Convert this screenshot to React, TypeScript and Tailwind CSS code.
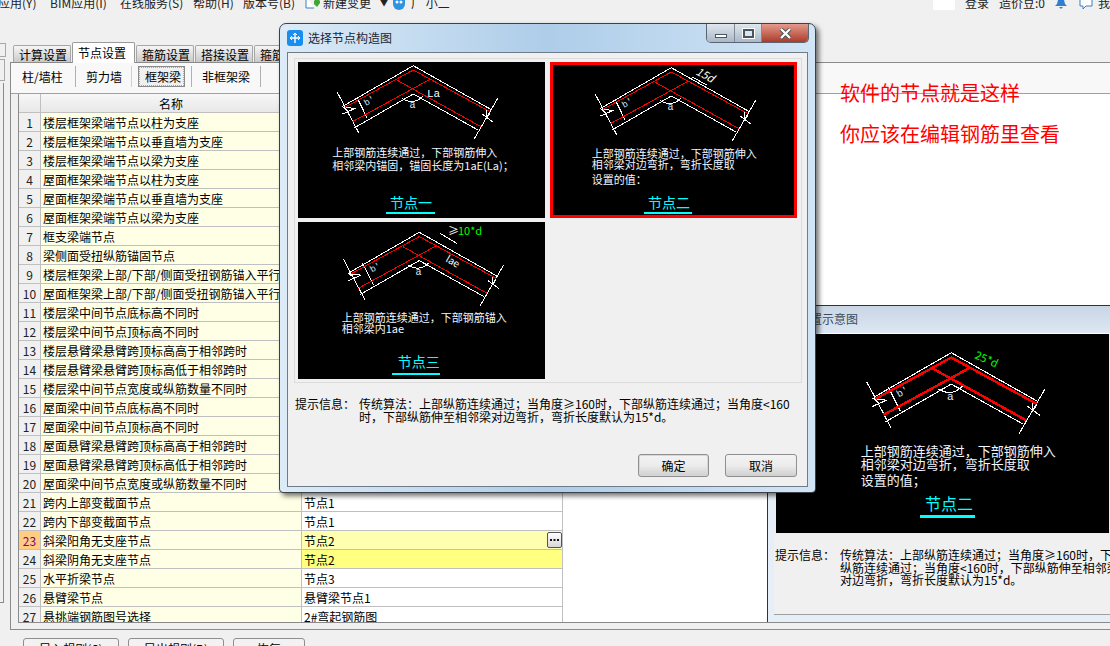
import type { ReactNode } from "react";

const COMMA = "\uFF0C";
const SEMI = "\uFF1B";
const COLON = "\uFF1A";

const names = [
  "楼层框架梁端节点以柱为支座",
  "楼层框架梁端节点以垂直墙为支座",
  "楼层框架梁端节点以梁为支座",
  "屋面框架梁端节点以柱为支座",
  "屋面框架梁端节点以垂直墙为支座",
  "屋面框架梁端节点以梁为支座",
  "框支梁端节点",
  "梁侧面受扭纵筋锚固节点",
  "楼层框架梁上部/下部/侧面受扭钢筋锚入平行墙节点",
  "屋面框架梁上部/下部/侧面受扭钢筋锚入平行墙节点",
  "楼层梁中间节点底标高不同时",
  "楼层梁中间节点顶标高不同时",
  "楼层悬臂梁悬臂跨顶标高高于相邻跨时",
  "楼层悬臂梁悬臂跨顶标高低于相邻跨时",
  "楼层梁中间节点宽度或纵筋数量不同时",
  "屋面梁中间节点底标高不同时",
  "屋面梁中间节点顶标高不同时",
  "屋面悬臂梁悬臂跨顶标高高于相邻跨时",
  "屋面悬臂梁悬臂跨顶标高低于相邻跨时",
  "屋面梁中间节点宽度或纵筋数量不同时",
  "跨内上部变截面节点",
  "跨内下部变截面节点",
  "斜梁阳角无支座节点",
  "斜梁阴角无支座节点",
  "水平折梁节点",
  "悬臂梁节点",
  "悬挑端钢筋图号选择",
];

const values: Record<number, string> = {
  21: "节点1",
  22: "节点1",
  23: "节点2",
  24: "节点2",
  25: "节点3",
  26: "悬臂梁节点1",
  27: "2#弯起钢筋图",
};

function Beam({ thick = false }: { thick?: boolean }) {
  const red = thick ? 2.2 : 1;
  return (
    <g fill="none" strokeWidth={1}>
      <polyline points="45.3,44 115.3,3.7 192.7,47.3" stroke="#fff" />
      <polyline points="56,66 115.3,32 180,68" stroke="#fff" />
      <polyline points="39.3,30.3 61,71.3" stroke="#fff" />
      <polyline points="199.7,36.3 176,77.3" stroke="#fff" />
      <polyline points="58.7,34.7 69.3,56.3" stroke="#fff" />
      <polyline points="43.7,52.3 57,46.5 45,45 51,50" stroke="#fff" />
      <polyline points="184,52 195,60" stroke="#fff" />
      <polyline points="188,47 189,56 192,51" stroke="#fff" />
      <path d="M103.7 36.3 Q115 44 125.3 34" stroke="#fff" />
      <polyline points="47,45.3 115.3,8 192,49.7" stroke="#f00" strokeWidth={red} />
      <polyline points="54.3,59.7 132,17.3" stroke="#f00" strokeWidth={red} />
      <polyline points="183,64.7 98.7,18" stroke="#f00" strokeWidth={red} />
      <text x="68" y="44" fontSize="9" fill="#cfe4ff" transform="rotate(-30 68 44)" className="font-['Liberation_Mono',monospace]">b'</text>
      <text x="111.5" y="46" fontSize="10" fill="#dfefff" className="font-['Liberation_Mono',monospace]">a</text>
    </g>
  );
}

function CadText({ x, y, size = 11, children }: { x: number; y: number; size?: number; children: ReactNode }) {
  return (
    <text x={x} y={y} fontSize={size} fill="#f2f6ff">
      {children}
    </text>
  );
}

function NodeCard({ selected = false, children }: { selected?: boolean; children: ReactNode }) {
  return (
    <div className={selected ? "relative h-full bg-black outline-[3px] -outline-offset-[3px] outline-[#ff0000]" : "h-full bg-black"}>
      <svg width="247" height="157" viewBox="0 0 247 157" className="block" shapeRendering="crispEdges">
        {children}
      </svg>
    </div>
  );
}

function NodeTitle({ x, y, w, lineX, lineY, label }: { x: number; y: number; w: number; lineX: number; lineY: number; label: string }) {
  return (
    <g>
      <text x={x} y={y} fontSize="14" fill="#00ffff">
        {label}
      </text>
      <rect x={lineX} y={lineY} width={w} height="2" fill="#00ffff" />
    </g>
  );
}

function TabItem({ label, active = false }: { label: string; active?: boolean }) {
  if (active) {
    return (
      <div className="relative z-10 -mb-px h-[21px] w-[63px] self-end rounded-t-[2px] border border-b-0 border-[#9a9a9a] bg-white pl-[5px] text-[12px] leading-[20px] text-black">
        {label}
      </div>
    );
  }
  return (
    <div className="h-[17px] w-[58px] self-end rounded-t-[2px] border border-b-0 border-[#a6a6a6] bg-gradient-to-b from-[#f6f6f6] to-[#c9c9c9] pl-[5px] text-[12px] leading-[17px] text-black">
      {label}
    </div>
  );
}

function WinButton({ label, wide }: { label: string; wide: string }) {
  return (
    <button className={`h-[23px] rounded-[3px] border border-[#8f8f8f] bg-gradient-to-b from-[#f3f3f3] via-[#ececec] to-[#cfcfcf] text-[12px] leading-[21px] text-black ${wide}`}>
      {label}
    </button>
  );
}

export default function App() {
  return (
    <div className="relative flex h-[646px] w-[1110px] flex-col overflow-hidden bg-[#f0f0f0] font-['Noto_Sans_CJK_SC',sans-serif] text-black">
      {/* top menu, cut off by the screenshot */}
      <div className="flex h-[10px] items-end overflow-hidden whitespace-nowrap text-[12px] leading-[14px] text-[#222]">
        <span className="-ml-[2px] w-[52px]">应用(Y)</span>
        <span className="w-[70px]">BIM应用(I)</span>
        <span className="w-[73px]">在线服务(S)</span>
        <span className="w-[50px]">帮助(H)</span>
        <span className="w-[62px]">版本号(B)</span>
        <svg width="16" height="14" viewBox="0 0 16 14" className="mr-[2px]">
          <path d="M1 0v12h8" fill="#fff" stroke="#3a7fc4" />
          <path d="M9 5l3-3 3 3v2l-3 4-3-3z" fill="#3fa535" />
        </svg>
        <span className="w-[57px]">新建变更</span>
        <span className="w-[12px] text-[8px] leading-[14px]">▼</span>
        <svg width="14" height="12" viewBox="0 0 14 12" className="mr-[5px]">
          <path d="M1 0h12v6a6 6 0 0 1-12 0z" fill="#2f93e0" />
          <circle cx="5" cy="4" r="1.5" fill="#fff" />
          <circle cx="9" cy="4" r="1.5" fill="#fff" />
        </svg>
        <span>广 小二</span>
        <div className="ml-auto flex items-end">
          <div className="mr-[10px] h-[10px] w-[22px] bg-white" />
          <span className="mr-[10px]">登录</span>
          <span className="mr-[10px]">造价豆:0</span>
          <svg width="12" height="10" viewBox="0 0 12 10" className="mr-[12px]">
            <path d="M3 0h6l1 4 2 2H0l2-2z" fill="#2f7fd0" />
            <path d="M4 7h4l-2 2z" fill="#2f7fd0" />
          </svg>
          <svg width="14" height="10" viewBox="0 0 14 10" className="mr-[5px]">
            <path d="M1 0v6h3v3l3-3h6V0" fill="#fff" stroke="#3a7fc4" />
          </svg>
          <span className="w-[12px]">我</span>
        </div>
      </div>
      <div className="h-[32px]" />

      <div className="flex h-[588px]">
        {/* left rail, mostly hidden behind the panel */}
        <div className="flex w-[10px] flex-col pt-px">
          <div className="h-[14px] w-[6px] border border-l-0 border-[#a8a8a8]" />
          <div className="mt-[2px] h-[22px] w-[5px] border border-l-0 border-[#a8a8a8]" />
          <div className="mt-[2px] h-[520px] w-[4px] border-r border-b border-[#8a8a8a]" />
        </div>

        <div className="flex min-w-0 flex-1 flex-col">
          <div className="flex h-[20px] gap-px pl-[3px]">
            <TabItem label="计算设置" />
            <TabItem label="节点设置" active />
            <TabItem label="箍筋设置" />
            <TabItem label="搭接设置" />
            <TabItem label="箍筋肢数" />
          </div>

          <div className="flex h-[568px] flex-col border-y border-l border-[#8a8a8a]">
            <div className="flex h-[31px] shrink-0 items-start border-b border-[#a0a0a0] bg-[#f8f8f8] pt-[3px] text-[12px] leading-[21px]">
              <div className="h-[21px] w-[65px] border-r border-[#b0b0b0] pl-[11px]">柱/墙柱</div>
              <div className="h-[21px] w-[56px] border-r border-[#d0d0d0] pl-[10px]">剪力墙</div>
              <div className="ml-[6px] h-[21px] w-[47px] border border-[#8a8a8a] bg-[#f0f0f0] pl-[6px] leading-[20px] outline-1 -outline-offset-2 outline-dotted outline-[#aaa]">框架梁</div>
              <div className="ml-[6px] h-[21px] w-[70px] border-x border-[#b0b0b0] pl-[10px]">非框架梁</div>
            </div>

            <div className="flex h-[529px] shrink-0 pl-[7px]">
              <div className="flex h-[529px] w-full overflow-hidden border-b border-l border-[#8a8a8a] bg-white">
                {/* parameter grid */}
                <div className="w-[748px] shrink-0 text-[12px] leading-[19px]">
                  <div className="flex h-[19px] w-[544px] border-b border-[#c0c0c0]">
                    <div className="w-[22px] border-r border-[#c0c0c0] bg-gradient-to-b from-[#f7f7f7] to-[#e8e8e8]" />
                    <div className="w-[522px] border-r border-[#c0c0c0] bg-gradient-to-b from-[#f7f7f7] to-[#e8e8e8]">
                      <div className="w-[260px] text-center">名称</div>
                    </div>
                  </div>
                  {names.map((name, i) => {
                    const no = i + 1;
                    return (
                      <div key={no} className="flex h-[19px] w-[544px] border-b border-[#c0c0c0]">
                        <div className={no === 23 ? "w-[22px] border-r border-[#c0c0c0] bg-[#ffcc80] text-center text-[#800080]" : "w-[22px] border-r border-[#c0c0c0] bg-[#f0f0f0] text-center text-[#222]"}>
                          {no}
                        </div>
                        <div className="w-[261px] overflow-hidden whitespace-nowrap border-r border-[#c0c0c0] bg-[#ffffe6] pl-[2px]">
                          {name}
                        </div>
                        <div className={no === 23 ? "relative w-[261px] border-r border-[#c0c0c0] bg-[#ffffb0] pl-[2px]" : no === 24 ? "w-[261px] border-r border-[#c0c0c0] bg-[#ffff80] pl-[2px]" : "w-[261px] border-r border-[#c0c0c0] bg-white pl-[2px]"}>
                          {values[no] ?? "节点1"}
                          {no === 23 && (
                            <div className="absolute right-0 top-px flex h-[16px] w-[15px] items-center justify-center rounded-[2px] border border-[#555] bg-gradient-to-b from-white to-[#d8d8d8]">
                              <svg width="9" height="3" viewBox="0 0 9 3">
                                <path d="M0 0h2v2H0zM3.5 0h2v2h-2zM7 0h2v2H7z" fill="#111" />
                              </svg>
                            </div>
                          )}
                        </div>
                      </div>
                    );
                  })}
                </div>

                {/* preview pane */}
                <div className="flex min-w-0 flex-1 flex-col">
                  <div className="h-[211px] shrink-0" />
                  <div className="flex h-[317px] shrink-0 flex-col border-l border-t border-[#333] bg-[#e6eef7]">
                    <div className="h-[28px] shrink-0 border-b border-white bg-gradient-to-b from-[#c9d6e4] to-[#dde7f3] pl-[6px] text-[12px] leading-[26px] text-[#3c4a58]">
                      节点设置示意图
                    </div>
                    <div className="h-[200px] shrink-0 pl-[8px]">
                      <svg width="333" height="199" viewBox="0 0 333 199" className="block bg-black" shapeRendering="crispEdges">
                        <g transform="translate(47.3 14.6) scale(1.11)">
                          <Beam thick />
                        </g>
                        <text x="198" y="24" fontSize="11" fill="#00ff00" transform="rotate(24 198 24)">25*d</text>
                        <CadText x={84.7} y={122} size={13}>{`上部钢筋连续通过${COMMA}下部钢筋伸入`}</CadText>
                        <CadText x={84.7} y={135} size={13}>{`相邻梁对边弯折${COMMA}弯折长度取`}</CadText>
                        <CadText x={84.7} y={151} size={13}>{`设置的值${SEMI}`}</CadText>
                        <text x="149" y="176" fontSize="16" fill="#00ffff">节点二</text>
                        <rect x="144" y="181" width="55" height="3" fill="#00ffff" />
                      </svg>
                    </div>
                    <div className="ml-[6px] flex-1 border-b border-[#a0a0a0] bg-[#f0f0f0] pl-px pt-[15px] text-[12px] leading-[12.5px] whitespace-nowrap">
                      <div className="flex overflow-hidden">
                        <div className="w-[65px] shrink-0">{`提示信息${COLON}`}</div>
                        <div>
                          <div>{`传统算法${COLON}上部纵筋连续通过${SEMI}当角度≥160时${COMMA}下部`}</div>
                          <div>{`纵筋连续通过${SEMI}当角度<160时${COMMA}下部纵筋伸至相邻梁`}</div>
                          <div>{`对边弯折${COMMA}弯折长度默认为15*d。`}</div>
                        </div>
                      </div>
                    </div>
                    <div className="h-[7px] shrink-0" />
                  </div>
                </div>
              </div>
            </div>
          </div>
        </div>
      </div>

      <div className="flex h-[16px] gap-[9px] pl-[23px] pt-[8px]">
        <div className="h-[24px] w-[96px] shrink-0 rounded-[3px] border border-[#8f8f8f] bg-[#f2f2f2] text-center text-[12px] leading-[20px]">导入规则(S)</div>
        <div className="h-[24px] w-[96px] shrink-0 rounded-[3px] border border-[#8f8f8f] bg-[#f2f2f2] text-center text-[12px] leading-[20px]">导出规则(B)</div>
        <div className="h-[24px] w-[72px] shrink-0 rounded-[3px] border border-[#8f8f8f] bg-[#f2f2f2] text-center text-[12px] leading-[20px]">恢复</div>
      </div>

      {/* annotation typed over the screenshot */}
      <div className="absolute left-[840px] top-[81px] flex flex-col gap-[17px] text-[20px] leading-[24px] text-[#ff0000]">
        <span>软件的节点就是这样</span>
        <span>你应该在编辑钢筋里查看</span>
      </div>

      {/* modal dialog */}
      <div className="absolute left-[279px] top-[23px] flex h-[470px] w-[537px] flex-col rounded-t-[7px] rounded-b-[4px] border border-[#3c4148] bg-gradient-to-r from-[#dcebf7] via-[#aecde9] to-[#d2e5f6] shadow-[3px_3px_5px_rgba(0,0,0,0.55)]">
        <div className="flex h-[28px] shrink-0 pl-[7px]">
          <svg width="16" height="16" viewBox="0 0 16 16" className="mt-[6px]">
            <rect width="16" height="16" rx="3" fill="#1a8df0" />
            <path d="M8 3v10M3 8h10" stroke="#fff" strokeWidth="1.4" />
            <path d="M6 5l2-2 2 2M5 6L3 8l2 2M11 6l2 2-2 2" fill="none" stroke="#fff" />
          </svg>
          <span className="ml-[5px] mt-[5px] text-[12px] leading-[18px] text-[#1c2530]">选择节点构造图</span>
          <div className="ml-auto mr-[6px] flex h-[19px] overflow-hidden rounded-b-[5px] border border-t-0 border-[#5b6570]">
            <div className="flex w-[28px] items-center justify-center border-r border-[#7f8a96] bg-gradient-to-b from-[#dfe7ef] to-[#a9b9c9]">
              <div className="mt-[5px] h-[4px] w-[12px] border border-[#4a5560] bg-white" />
            </div>
            <div className="flex w-[27px] items-center justify-center border-r border-[#7f8a96] bg-gradient-to-b from-[#dfe7ef] to-[#a9b9c9]">
              <div className="h-[9px] w-[11px] border-2 border-[#4a5560] bg-[#dce6ef] outline-1 outline-white" />
            </div>
            <div className="flex w-[46px] items-center justify-center bg-gradient-to-b from-[#e39a8c] to-[#ab3a2a]">
              <svg width="13" height="11" viewBox="0 0 13 11">
                <path d="M2 1l9 9M11 1l-9 9" stroke="#4a4a4a" strokeWidth="4" />
                <path d="M2 1l9 9M11 1l-9 9" stroke="#fff" strokeWidth="2.4" />
              </svg>
            </div>
          </div>
        </div>

        <div className="mx-[7px] mb-[5px] flex min-h-0 flex-1 flex-col border border-[#6f7b88] bg-[#f0f0f0] text-[12px]">
          <div className="ml-[6px] mt-[5px] w-[508px] shrink-0 border border-[#dcdcdc] p-[3px]">
            <div className="grid grid-cols-[247px_247px] grid-rows-[156px_157px] gap-x-[5px] gap-y-[4px]">
              <NodeCard>
                <Beam />
                <text x="129" y="35" fontSize="11" fill="#fff" className="font-['Liberation_Mono',monospace]">La</text>
                <CadText x={34.3} y={95}>{`上部钢筋连续通过${COMMA}下部钢筋伸入`}</CadText>
                <CadText x={34.3} y={108}>{`相邻梁内锚固${COMMA}锚固长度为1aE(La)${SEMI}`}</CadText>
                <NodeTitle x={92} y={146} w={49} lineX={88} lineY={150} label="节点一" />
              </NodeCard>
              <NodeCard selected>
                <g transform="translate(6 2)">
                  <Beam />
                </g>
                <polyline points="141.7,14.7 156.7,23" fill="none" stroke="#fff" />
                <text x="145" y="12" fontSize="11" fill="#fff" fontStyle="italic" transform="rotate(28 145 12)">15d</text>
                <CadText x={41.7} y={96}>{`上部钢筋连续通过${COMMA}下部钢筋伸入`}</CadText>
                <CadText x={41.7} y={107}>{`相邻梁对边弯折${COMMA}弯折长度取`}</CadText>
                <CadText x={41.7} y={122}>{`设置的值${COLON}`}</CadText>
                <NodeTitle x={98} y={146} w={48} lineX={94} lineY={150} label="节点二" />
              </NodeCard>
              <NodeCard>
                <g transform="translate(6 6.6)">
                  <Beam />
                </g>
                <polyline points="142,11.3 158.7,21.3" fill="none" stroke="#fff" />
                <text x="150" y="13" fontSize="11" fill="#fff">≥</text>
                <text x="160" y="13" fontSize="11" fill="#00ff00">10*d</text>
                <text x="147" y="39" fontSize="10" fill="#fff" transform="rotate(30 147 39)">lae</text>
                <CadText x={43.7} y={100}>{`上部钢筋连续通过${COMMA}下部钢筋锚入`}</CadText>
                <CadText x={43.7} y={111}>相邻梁内1ae</CadText>
                <NodeTitle x={99.7} y={145} w={48} lineX={94} lineY={151} label="节点三" />
              </NodeCard>
              <div />
            </div>
          </div>

          <div className="ml-[7px] mt-[15px] flex whitespace-nowrap leading-[12.5px]">
            <div className="w-[64px] shrink-0">{`提示信息${COLON}`}</div>
            <div>
              <div>{`传统算法${COLON}上部纵筋连续通过${SEMI}当角度≥160时${COMMA}下部纵筋连续通过${SEMI}当角度<160`}</div>
              <div>{`时${COMMA}下部纵筋伸至相邻梁对边弯折${COMMA}弯折长度默认为15*d。`}</div>
            </div>
          </div>

          <div className="mb-[9px] mt-auto flex justify-end gap-[16px] pr-[10px]">
            <WinButton label="确定" wide="w-[71px] border-[#3c9bcb] shadow-[inset_0_0_0_1px_#b5e2f5]" />
            <WinButton label="取消" wide="w-[72px]" />
          </div>
        </div>
      </div>
    </div>
  );
}
